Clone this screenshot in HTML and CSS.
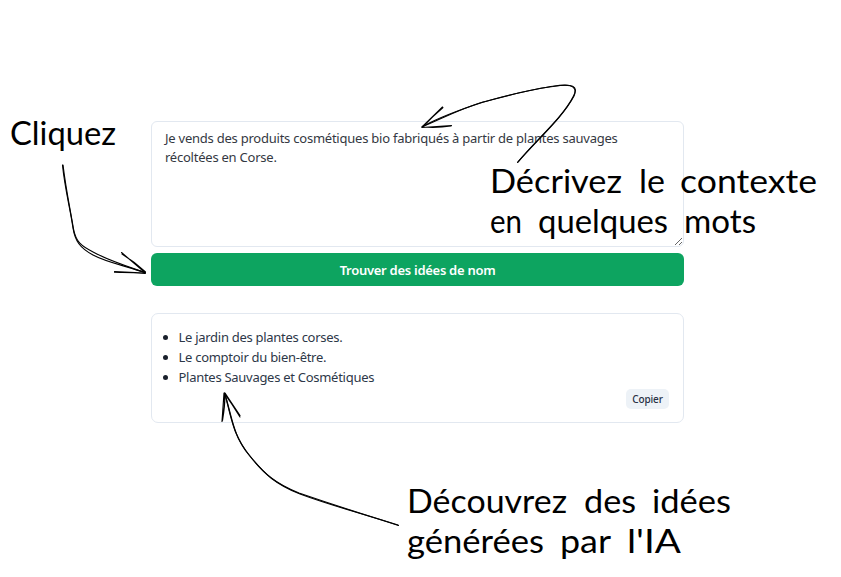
FILE: index.html
```html
<!DOCTYPE html>
<html lang="fr">
<head>
<meta charset="utf-8">
<title>Trouver des idées de nom</title>
<link rel="stylesheet" href="styles.css">
</head>
<body>
<main class="generator">
  <textarea class="context" spellcheck="false">Je vends des produits cosmétiques bio fabriqués à partir de plantes sauvages
récoltées en Corse.</textarea>
  <button class="submit">Trouver des idées de nom</button>
  <section class="results">
    <ul class="ideas">
      <li>Le jardin des plantes corses.</li>
      <li>Le comptoir du bien-être.</li>
      <li>Plantes Sauvages et Cosmétiques</li>
    </ul>
    <button class="copy">Copier</button>
  </section>
</main>
<svg class="annotations" viewBox="0 0 841 577" width="841" height="577">
  <g class="handwriting">
    <text x="10" y="145" textLength="106" lengthAdjust="spacingAndGlyphs">Cliquez</text>
    <text x="490" y="193" textLength="132" lengthAdjust="spacingAndGlyphs">Décrivez</text>
    <text x="639" y="193" textLength="26" lengthAdjust="spacingAndGlyphs">le</text>
    <text x="680" y="193" textLength="137" lengthAdjust="spacingAndGlyphs">contexte</text>
    <text x="490" y="233" textLength="32" lengthAdjust="spacingAndGlyphs">en</text>
    <text x="538" y="233" textLength="130" lengthAdjust="spacingAndGlyphs">quelques</text>
    <text x="684" y="233" textLength="72" lengthAdjust="spacingAndGlyphs">mots</text>
    <text x="407" y="513" textLength="160" lengthAdjust="spacingAndGlyphs">Découvrez</text>
    <text x="584" y="513" textLength="52" lengthAdjust="spacingAndGlyphs">des</text>
    <text x="652" y="513" textLength="79" lengthAdjust="spacingAndGlyphs">idées</text>
    <text x="407" y="553" textLength="137" lengthAdjust="spacingAndGlyphs">générées</text>
    <text x="560" y="553" textLength="51" lengthAdjust="spacingAndGlyphs">par</text>
    <text x="627" y="553" textLength="54" lengthAdjust="spacingAndGlyphs">l'IA</text>
  </g>
  <g class="arrows">
    <path d="M62.5 165C65 190 70 207 73 228C75 241 80 248 93 255C108 263 127 266 145.500 273"/>
    <path d="M63 165C66 190 70 208 73.500 229C76 242 81 246 94 252.500C110 261 129 267 145 272.500"/>
    <path d="M121.500 252.500L145 272.500M122 254Q135 262 145.500 272M114.500 271.500L145.500 273M114.500 272.500Q130 272 145 273.500"/>
    <path d="M517.500 162.500C538 138 562 118 573 97C580 85 571 84 555 86C531 89 506 96 483 102C462 108 441 119 422 127"/>
    <path d="M518 162C539 138 563 117 574 96C579 84 566 84 553 86.500C530 89 505 96 482 102.500C462 109 440 117 422.500 126.500"/>
    <path d="M442.500 107L422 127M443 107.500Q433 116 423 126.500M422 127.500L451.500 125.500M423 127Q438 128 451 126"/>
    <path d="M398.500 525.500C365 514 335 507 300 494C277 485 265 475 250 456C232 435 232 415 224.500 393"/>
    <path d="M398 525C365 515 334 505 299 493C276 484 264 474 249 455C233 435 231 417 225 394"/>
    <path d="M222 421.500Q223 408 224 393M222.500 420.500Q225 406 225 394M240 417Q232 404 224.500 393.500M240 415.500L225 393"/>
  </g>
</svg>
</body>
</html>
```

FILE: styles.css
```css
* { box-sizing: border-box; }
body {
  margin: 0;
  height: 577px;
  overflow: hidden;
  background: #fff;
  color: #2d3748;
  font-family: "Noto Sans", sans-serif;
}
.generator {
  display: flex;
  flex-direction: column;
  width: 533px;
  margin: 121px 0 0 151px;
}
.context {
  height: 126px;
  margin: 0 0 6px;
  padding: 7px 13px;
  border: 1px solid #e2e8f0;
  border-radius: 6px;
  outline: 0;
  background: #fff;
  color: #343842;
  font: 13px/19px "Noto Sans", sans-serif;
  letter-spacing: -0.235px;
  resize: vertical;
  white-space: pre;
  overflow: hidden;
}
.submit {
  height: 33px;
  padding: 0;
  border: 0;
  border-radius: 6px;
  background: #0da460;
  color: #fff;
  font: 600 13px/20px "Noto Sans", sans-serif;
  letter-spacing: -0.28px;
}
.results {
  display: flex;
  flex-direction: column;
  height: 110px;
  margin-top: 27px;
  padding: 13px 14px;
  border: 1px solid #e2e8f0;
  border-radius: 7px;
}
.ideas {
  margin: 0;
  padding-left: 12.5px;
  font-size: 13px;
  letter-spacing: -0.28px;
  line-height: 20px;
}
.ideas li::marker {
  color: #1a202c;
}
.copy {
  align-self: flex-end;
  flex: none;
  width: 43px;
  height: 20px;
  margin-top: 2px;
  padding: 0;
  border: 0;
  border-radius: 5px;
  background: #edf2f7;
  color: #283044;
  font: 500 10px/20px "Noto Sans", sans-serif;
  letter-spacing: -0.1px;
}
.annotations {
  position: absolute;
  top: 0;
  left: 0;
  pointer-events: none;
}
.handwriting {
  font-family: "Virgil", "Lato", sans-serif;
  font-size: 33px;
}
.arrows {
  fill: none;
  stroke: #000;
  stroke-width: 1.15;
  stroke-linecap: round;
}
```
